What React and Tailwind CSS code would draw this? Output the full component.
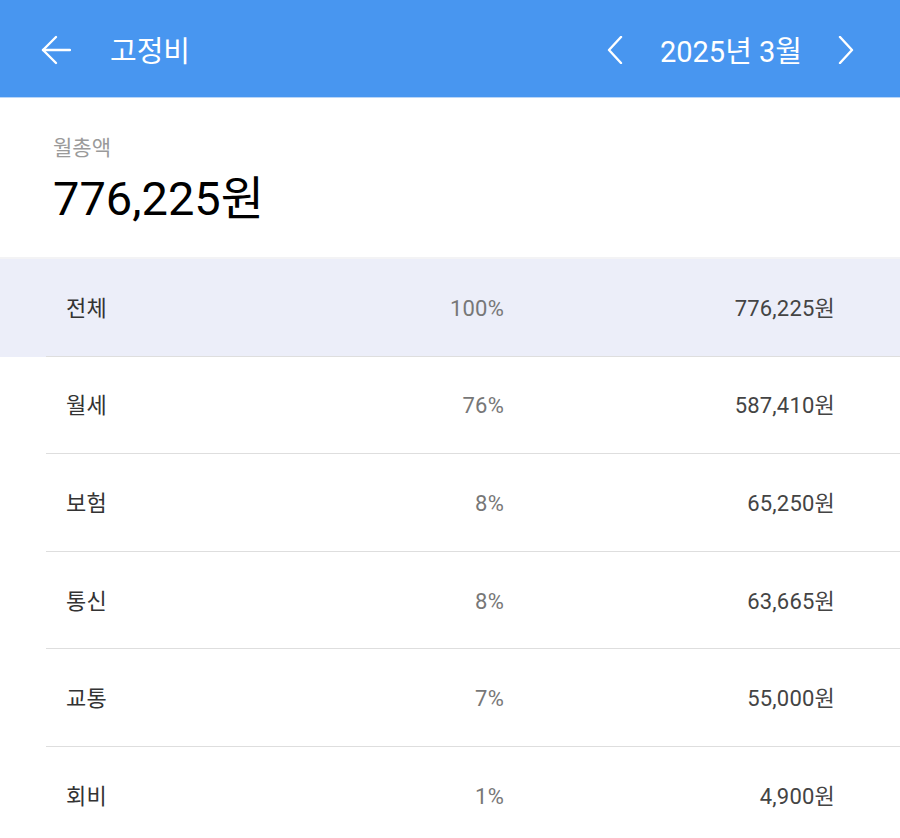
import React from "react";

const rows = [
  { label: "전체", pct: "100%", amount: "776,225원", active: true },
  { label: "월세", pct: "76%", amount: "587,410원" },
  { label: "보험", pct: "8%", amount: "65,250원" },
  { label: "통신", pct: "8%", amount: "63,665원" },
  { label: "교통", pct: "7%", amount: "55,000원" },
  { label: "회비", pct: "1%", amount: "4,900원" },
];

const font = { fontFamily: "Roboto, 'Noto Sans CJK KR', sans-serif" };

function ArrowLeft() {
  return (
    <svg width="30" height="30" viewBox="0 0 30 30" fill="none" stroke="white" strokeWidth="2.4" strokeLinecap="round" strokeLinejoin="round">
      <path d="M29 15H2" />
      <path d="M15 2L2 15L15 28" />
    </svg>
  );
}

function Chevron({ dir }) {
  return (
    <svg width="18" height="28" viewBox="0 0 18 28" fill="none" stroke="white" strokeWidth="2.4" strokeLinecap="round" strokeLinejoin="round">
      {dir === "left" ? <path d="M15 1L3 14L15 27" /> : <path d="M3 1L15 14L3 27" />}
    </svg>
  );
}

export default function App() {
  return (
    <div className="min-h-[838px] w-[900px] overflow-hidden bg-white" style={font}>
      <header className="flex h-[97px] items-center bg-[#4896f0] text-white shadow-[0_1px_0_#b9d6f8]">
        <button className="ml-[41px] mt-[2px] flex h-[30px] w-[30px] items-center justify-center">
          <ArrowLeft />
        </button>
        <h1 className="ml-[39px] pt-[6px] text-[29px] font-normal leading-[40px]">고정비</h1>
        <div className="ml-auto flex items-center">
          <button className="mt-[2px] flex items-center"><Chevron dir="left" /></button>
          <span className="ml-[36px] pt-[6px] text-[29px] leading-[40px]">2025년 3월</span>
          <button className="ml-[35px] mr-[45px] mt-[2px] flex items-center"><Chevron dir="right" /></button>
        </div>
      </header>

      <section className="h-[162px] border-b-2 border-[#f3f3f5] pl-[53px] pt-[37px]">
        <p className="text-[21px] leading-[28px] text-[#9a9a9a]">월총액</p>
        <p className="mt-[8px] text-[47px] leading-[58px] text-black">776,225원</p>
      </section>

      <div>
        {rows.map((row) => (
          <div key={row.label} className={row.active ? "bg-[#eceef9]" : "bg-white"}>
            <div className="ml-[46px] flex h-[97.6px] items-center border-b border-[#dedede] pt-[2px] text-[22px] tracking-[0.2px]">
              <span className="flex-1 pl-[20px] text-[#333333]">{row.label}</span>
              <span className="w-[100px] text-right text-[#777777]">{row.pct}</span>
              <span className="w-[331px] text-right text-[#444444]">{row.amount}</span>
              <span className="w-[65px]" />
            </div>
          </div>
        ))}
      </div>
    </div>
  );
}
